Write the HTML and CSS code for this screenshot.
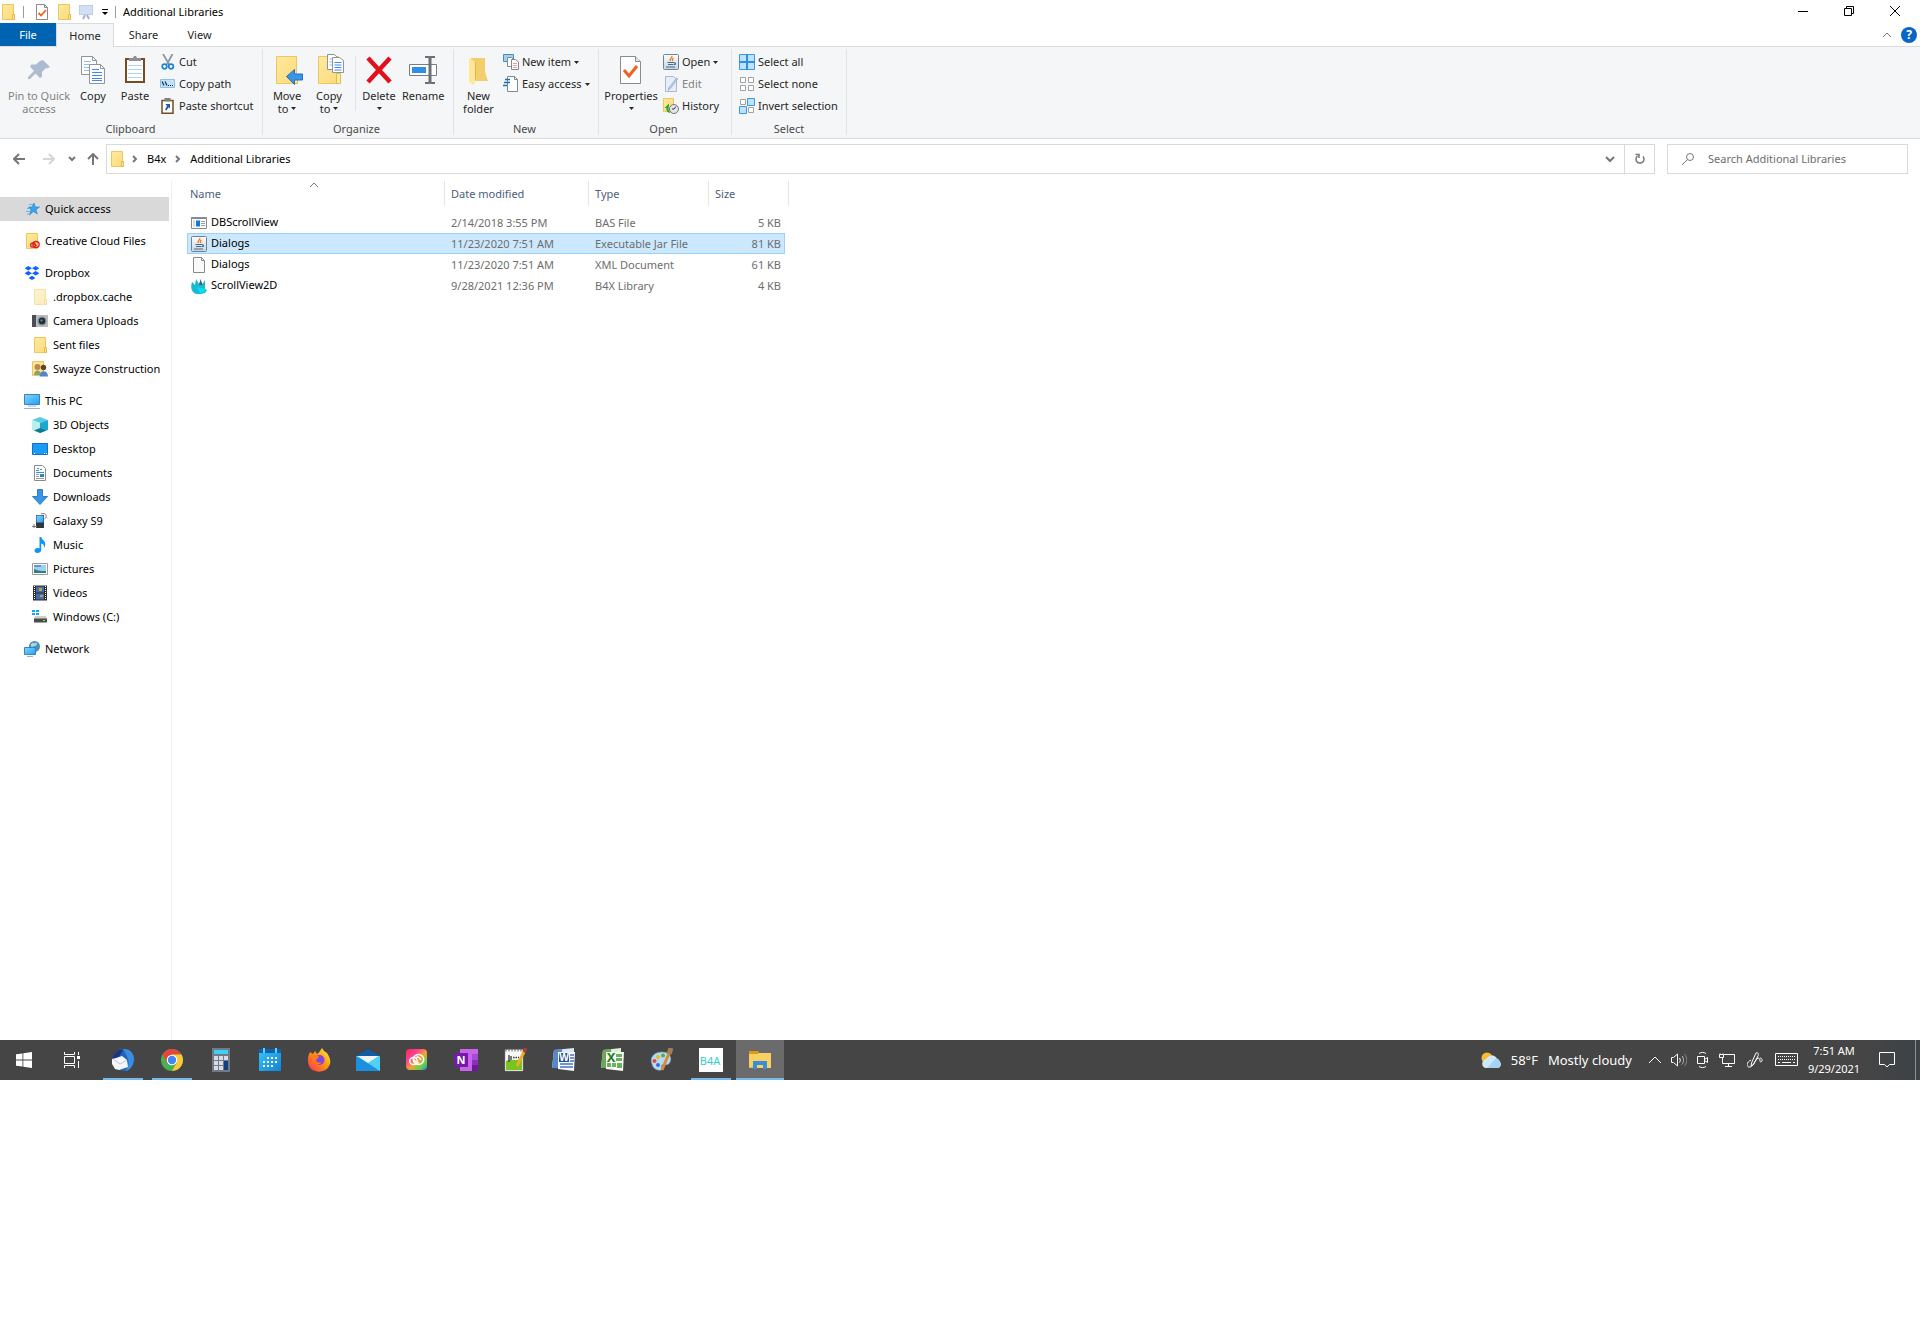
FILE: index.html
```html
<!DOCTYPE html>
<html lang="en">
<head>
  <meta charset="UTF-8">
  <title>Additional Libraries</title>
  <link rel="stylesheet" href="styles.css">
</head>
<body>
  <svg class="sprite" aria-hidden="true">
    <defs>
      <linearGradient id="gFolder" x1="0" y1="0" x2="1" y2="1">
        <stop offset="0" stop-color="#ffeaa0"/><stop offset="1" stop-color="#fbd97a"/>
      </linearGradient>
      <linearGradient id="gScreen" x1="0" y1="0" x2="1" y2="1">
        <stop offset="0" stop-color="#86d4ff"/><stop offset="1" stop-color="#1ea0fb"/>
      </linearGradient>
      <linearGradient id="gBlue" x1="0" y1="0" x2="1" y2="1">
        <stop offset="0" stop-color="#36c5f5"/><stop offset="1" stop-color="#1183d8"/>
      </linearGradient>
      <linearGradient id="gRainbow" x1="0" y1="0" x2="1" y2="1">
        <stop offset="0" stop-color="#ff2a3c"/><stop offset=".3" stop-color="#ff3e98"/>
        <stop offset=".55" stop-color="#f5a033"/><stop offset=".8" stop-color="#5fd24a"/>
        <stop offset="1" stop-color="#2c7cff"/>
      </linearGradient>
      <linearGradient id="gFire" x1="1" y1="0" x2="0" y2="1">
        <stop offset="0" stop-color="#fff44f"/><stop offset=".45" stop-color="#ff980e"/>
        <stop offset="1" stop-color="#ff2a5f"/>
      </linearGradient>
      <linearGradient id="gJava" x1="0" y1="0" x2="0" y2="1">
        <stop offset="0" stop-color="#fdfdfd"/><stop offset="1" stop-color="#c9d4de"/>
      </linearGradient>
    </defs>

    <symbol id="folder" viewBox="0 0 16 16">
      <path d="M2.5.5h11v10h1v5h-12z" fill="url(#gFolder)" stroke="#ecc75d"/>
      <path d="M12.5 10.5h2v5h-2z" fill="#ffe9a2" stroke="#e4bb4b"/>
    </symbol>
    <symbol id="check-page" viewBox="0 0 16 16">
      <path d="M2.5.5h8l3 3v12h-11z" fill="#fff" stroke="#8b8b8b"/>
      <path d="M10.5.5v3h3" fill="none" stroke="#8b8b8b"/>
      <path d="M4.5 9l2.500 2.500 5-5.500" fill="none" stroke="#f2601f" stroke-width="1.800"/>
    </symbol>
    <symbol id="easel" viewBox="0 0 16 16">
      <path d="M1 1h14v10H1z" fill="#bccfe9"/>
      <path d="M2 2h12v8H2z" fill="#d3e0f3"/>
      <path d="M7 11l-2 4M9 11l2 4" stroke="#9fb3d2" stroke-width="2"/>
    </symbol>
    <symbol id="pin" viewBox="0 0 32 32">
      <path d="M20 6l7 7-3 1.500-1-.5-4 4 0 4.500-2 1.500-4.500-4.500L7 25H5v-2l6-6-4-4.500 1.500-2H13l4-3.500z" fill="#adbbd0"/>
    </symbol>
    <symbol id="copy" viewBox="0 0 32 32">
      <path d="M4.500 2.500h11l4 4v14h-15z" fill="#fff" stroke="#8f959c"/>
      <path d="M15.500 2.500v4h4" fill="none" stroke="#8f959c"/>
      <path d="M7 7.500h7M7 10.500h10M7 13.500h10M7 16.500h10" stroke="#8fbdf0"/>
      <path d="M12.500 10.500h11l4 4v15h-15z" fill="#fff" stroke="#8f959c"/>
      <path d="M23.500 10.500v4h4" fill="none" stroke="#8f959c"/>
      <path d="M15 15.500h7M15 18.500h10M15 21.500h10M15 24.500h10M15 26.500h10" stroke="#3f8ce8"/>
    </symbol>
    <symbol id="paste" viewBox="0 0 32 32">
      <path d="M7 5h18v23H7z" fill="#fff" stroke="#7a4a23" stroke-width="2"/>
      <path d="M9 11.500h14M9 15.500h14M9 19.500h14M9 23.500h14" stroke="#a9d7ee"/>
      <path d="M10 7V4h4l1-2h2l1 2h4v3z" fill="#8d8f92"/>
    </symbol>
    <symbol id="cut" viewBox="0 0 16 16">
      <path d="M3 0l6.500 11M12.500 0L6.500 11" stroke="#8b98a5" stroke-width="1.800"/>
      <circle cx="4.500" cy="12.500" r="2.300" fill="none" stroke="#1d83c9" stroke-width="1.700"/>
      <circle cx="11" cy="12.500" r="2.300" fill="none" stroke="#1d83c9" stroke-width="1.700"/>
    </symbol>
    <symbol id="copy-path" viewBox="0 0 16 16">
      <path d="M.5 3.500h14v8H.5z" fill="#c3e2f8" stroke="#8dc0e8"/>
      <path d="M2 5.500l2 4M5 5.500l2 4" stroke="#15324b" stroke-width="1.200"/>
      <path d="M8 9.500h1M10 9.500h1M12 9.500h1" stroke="#15324b"/>
    </symbol>
    <symbol id="paste-shortcut" viewBox="0 0 16 16">
      <path d="M2 2.500h11v12.700H2z" fill="#fff" stroke="#7a4a23" stroke-width="1.500"/>
      <path d="M4.500 0h6v3.500h-6z" fill="#7d8186"/>
      <path d="M5.500 6H10v4.500L8.500 9.300 6.500 12.500 5 11.500l2-3.500z" fill="#1d5ca8"/>
    </symbol>
    <symbol id="move-to" viewBox="0 0 32 32">
      <path d="M5.500 2.500h20v27h-20z" fill="url(#gFolder)" stroke="#ecc75d"/>
      <path d="M22.500 20.500h4v9h-4z" fill="#ffe9a2" stroke="#e4bb4b"/>
      <path d="M15.500 22.500l8-7v4.500h8v6h-8v4.500z" fill="#3a95e4" stroke="#2272bd"/>
    </symbol>
    <symbol id="copy-to" viewBox="0 0 32 32">
      <path d="M5.500 2.500h20v27h-20z" fill="url(#gFolder)" stroke="#ecc75d"/>
      <path d="M23.500 19.500h4v10h-4z" fill="#ffe9a2" stroke="#e4bb4b"/>
      <path d="M14.500.500h7l3 3v12h-10z" fill="#fff" stroke="#8f959c"/>
      <path d="M16.500 5h6M16.500 8h6M16.500 11h6" stroke="#8fbdf0"/>
      <path d="M19.500 3.500h7l4 3v12h-11z" fill="#fff" stroke="#8f959c"/>
      <path d="M21.500 8.500h7M21.500 11h7M21.500 13.500h7M21.500 16h7" stroke="#3f8ce8"/>
    </symbol>
    <symbol id="delete" viewBox="0 0 32 32">
      <path d="M5 4l22 24M27 4L5 28" stroke="#e3101b" stroke-width="4.500"/>
    </symbol>
    <symbol id="rename" viewBox="0 0 32 32">
      <path d="M2.500 10.500h27v11h-27z" fill="#fff" stroke="#777d83"/>
      <path d="M5 13h14v6H5z" fill="#2f8fe6"/>
      <path d="M23 4v24" stroke="#6b7076" stroke-width="3"/>
      <path d="M18 3h4l1 1 1-1h4M18 29h4l1-1 1 1h4" fill="none" stroke="#6b7076" stroke-width="2"/>
    </symbol>
    <symbol id="new-folder" viewBox="0 0 32 32">
      <path d="M8 4h14v14l3 9H8z" fill="#f3cf6c"/>
      <path d="M6 4l6 4v19l-1 4-5-3z" fill="#ffe798"/>
      <path d="M12 8h1v16l-1 3z" fill="#dfb54d"/>
    </symbol>
    <symbol id="new-item" viewBox="0 0 16 16">
      <path d="M.5.5h10v7H.5z" fill="#9fd0ee" stroke="#4a8dba"/>
      <path d="M4.500 3.500h4l2 2v7h-6z" fill="#fff" stroke="#82888f"/>
      <path d="M8.500 5.500h4l3 2.500v7.500h-7z" fill="#fff" stroke="#82888f"/>
      <path d="M10 9.500h4M10 11.500h4M10 13.500h4" stroke="#e0a0a0"/>
    </symbol>
    <symbol id="easy-access" viewBox="0 0 16 16">
      <path d="M4.500.5h7l3 3v12h-10z" fill="#fff" stroke="#82888f"/>
      <path d="M11.500.5v3h3" fill="none" stroke="#82888f"/>
      <path d="M2 3.500h5M1 6.500h6M0 9.500h4" stroke="#1c72b8" stroke-width="1.400"/>
    </symbol>
    <symbol id="properties" viewBox="0 0 32 32">
      <path d="M5.500 2.500h15l5 5v22h-20z" fill="#fdfdfd" stroke="#8b8b8b"/>
      <path d="M20.500 2.500v5h5" fill="#e6e6e6" stroke="#8b8b8b"/>
      <path d="M9 16l5 6 8-10" fill="none" stroke="#f2601f" stroke-width="3"/>
    </symbol>
    <symbol id="java" viewBox="0 0 16 16">
      <rect x=".5" y=".5" width="15" height="15" rx="1" fill="url(#gJava)" stroke="#6d8297"/>
      <path d="M8.800 2c1 1.500-2.800 2.500-1.300 5M10.500 4c-1.500.8-1.500 1.500-.8 3" fill="none" stroke="#ee7d20" stroke-width="1.300"/>
      <path d="M4.500 8.500h7M5 10.500h5.500M3 13h9M11 9h1.500v1.500H11" fill="none" stroke="#3f6b93"/>
    </symbol>
    <symbol id="edit" viewBox="0 0 16 16">
      <path d="M2.500.5h8l3 3v12h-11z" fill="#e7eefa" stroke="#a9b9d4"/>
      <path d="M15 3L7 13l-2 1.500.5-2.500 8-10z" fill="#b6c6e0" stroke="#9aadcc" stroke-width=".6"/>
    </symbol>
    <symbol id="history" viewBox="0 0 16 16">
      <path d="M.5.5h10v13H.5z" fill="url(#gFolder)" stroke="#ecc75d"/>
      <circle cx="11" cy="11" r="4.500" fill="#e2e6ea" stroke="#71777d"/>
      <path d="M11 11l2-2.500M11 11h-2" stroke="#333"/>
      <path d="M1.500 10L6 5.500v2.500C5 10.500 5.500 13 7.500 14.800 4.500 14.800 3 12.500 3.500 10z" fill="#1fa531"/>
    </symbol>
    <symbol id="select-all" viewBox="0 0 16 16">
      <path d="M.5.5h15v15H.5z" fill="#bfe2fc" stroke="#3a98e6"/>
      <path d="M8 0v16M0 8h16" stroke="#2f8fe0" stroke-width="2"/>
    </symbol>
    <symbol id="select-none" viewBox="0 0 16 16">
      <path d="M1.500 1.500h5v5h-5zM9.500 1.500h5v5h-5zM1.500 9.500h5v5h-5zM9.500 9.500h5v5h-5z" fill="#fff" stroke="#a3a3a3"/>
    </symbol>
    <symbol id="invert" viewBox="0 0 16 16">
      <path d="M1.500 1.500h5v5h-5zM9.500 9.500h5v5h-5z" fill="#fff" stroke="#a3a3a3"/>
      <path d="M8.500.5h7v7h-7zM.5 8.500h7v7h-7z" fill="#bfe2fc" stroke="#3a98e6"/>
    </symbol>

    <symbol id="star" viewBox="0 0 16 16">
      <path d="M10 2l1.300 4H15.500l-3.500 2.700 1.300 4.300L9.500 10.500 5.500 14 7 9 4.500 6H8z" fill="#39a3ea" stroke="#2484c7" stroke-width=".6"/>
      <path d="M5 3.500h4M3 7.500h3M2 10.500h4M3 13h2" stroke="#5fb7ee"/>
    </symbol>
    <symbol id="cc-folder" viewBox="0 0 16 16">
      <path d="M2.500.5h11v15h-11z" fill="url(#gFolder)" stroke="#ecc75d"/>
      <ellipse cx="9" cy="12" rx="2.400" ry="2.200" fill="#ffe08a" stroke="#da1f26" stroke-width="1.300"/>
      <ellipse cx="12" cy="11.500" rx="3.200" ry="3" fill="none" stroke="#da1f26" stroke-width="1.300"/>
      <path d="M9 11.500c1.500-1.500 2 2 4 .8" fill="none" stroke="#da1f26"/>
    </symbol>
    <symbol id="dropbox" viewBox="0 0 16 16">
      <path d="M4.300 1L8 3.300 4.300 5.600.6 3.300zM11.700 1l3.700 2.300-3.700 2.300L8 3.300zM4.300 6L8 8.300l-3.700 2.300L.6 8.300zM11.700 6l3.700 2.300-3.700 2.300L8 8.300zM8 10.800l3.500 2.100L8 15l-3.500-2.100z" fill="#0f62fe"/>
    </symbol>
    <symbol id="camera" viewBox="0 0 16 16">
      <path d="M0 2h4v12H0z" fill="#4b4f54"/><path d="M4 2h12v12H4z" fill="#b9bcc0"/>
      <circle cx="10" cy="8" r="4.500" fill="#878b90"/><circle cx="10" cy="8" r="3.200" fill="#1d2b33"/>
      <circle cx="9.500" cy="7.500" r="1.200" fill="#3a8c97"/>
    </symbol>
    <symbol id="people" viewBox="0 0 16 16">
      <path d="M.5.5h11v14H.5z" fill="url(#gFolder)" stroke="#ecc75d"/>
      <circle cx="5.500" cy="6" r="3" fill="#b98a4e"/><path d="M2 14c0-6 7-6 7 0z" fill="#7fa67a"/>
      <circle cx="11.500" cy="6.500" r="2.700" fill="#6a4129"/><path d="M7.500 15.500c0-7 8.500-7 8.500 0z" fill="#5585c2"/>
    </symbol>
    <symbol id="pc" viewBox="0 0 16 16">
      <path d="M.5 1.500h15v10H.5z" fill="url(#gScreen)" stroke="#3d83b8"/>
      <path d="M4 13h8M0 15.500h16" stroke="#9eb3c4"/>
    </symbol>
    <symbol id="cube" viewBox="0 0 16 16">
      <path d="M0 3l8-3 8 3-8 3z" fill="#59cbe0"/><path d="M0 3l8 3v10l-8-3z" fill="#b9eef0"/>
      <path d="M8 6l8-3v10l-8 3z" fill="#17a9cf"/><path d="M2 13.500L8 11l6 2.500L8 16z" fill="#12798f"/>
    </symbol>
    <symbol id="desktop" viewBox="0 0 16 16">
      <path d="M.5 2.500h15v11H.5z" fill="#1b9bf9" stroke="#1173b9"/>
      <path d="M2 12.500h1M12 12.500h1M14 12.500h1" stroke="#fff"/>
    </symbol>
    <symbol id="document" viewBox="0 0 16 16">
      <path d="M2.500.5h8l3 3v12h-11z" fill="#fff" stroke="#8a8a8a"/>
      <path d="M4 7.500h8M8 4.500h2M8 9.500h4M4 5.500h3M5 3.500h2" stroke="#2a95e0"/>
      <path d="M4 9.500h3M4 11.500h3M4 13.500h8" stroke="#9a9a9a"/><path d="M8 10h4v2H8z" fill="#3a7f96"/>
    </symbol>
    <symbol id="download" viewBox="0 0 16 16">
      <path d="M5.500.5h5v7h5L8 15.500.5 7.500h5z" fill="#3a93e6" stroke="#2f7dc8"/>
    </symbol>
    <symbol id="device" viewBox="0 0 16 16">
      <path d="M4 2h8v13H4z" fill="#33373b"/><path d="M4.500 2.500h7v7h-7z" fill="url(#gScreen)"/>
      <path d="M9 1c5-2 7 3 3.500 5M0 13.500h5M2 11v4" fill="none" stroke="#777"/>
    </symbol>
    <symbol id="music" viewBox="0 0 16 16">
      <path d="M7.500 0h1.700c.5 3 4 3.500 4 7 0 2-.7 3-1.200 4 .2-3-.6-4-2.800-4.500v6.500c0 2-1.700 3-3.700 3S2.500 15 2.500 13.500C2.500 11.500 5.500 10.500 7.500 11.500z" fill="#0b97f3"/>
    </symbol>
    <symbol id="picture" viewBox="0 0 16 16">
      <path d="M.5 2.500h15v11H.5z" fill="#fff" stroke="#9a9a9a"/><path d="M2 4h12v8H2z" fill="#9fd0ef"/>
      <path d="M2 8l4 1.500 4 .5h4v2H2z" fill="#2f7f7c"/><path d="M2 4h7v2H2z" fill="#5f96d6"/>
    </symbol>
    <symbol id="video" viewBox="0 0 16 16">
      <path d="M1 .5h14v15H1z" fill="#2e2e2e"/><path d="M2.500 1v14M13.500 1v14" stroke="#fff" stroke-dasharray="1 1"/>
      <path d="M4 1.500h8v6H4zM4 8.500h8v6H4z" fill="#3f6db5"/><path d="M7 3h3v3H7zM8 10h3v2H8z" fill="#d89a27"/>
    </symbol>
    <symbol id="drive" viewBox="0 0 16 16">
      <path d="M0 1h3v2H0zM4 1h3v2H4zM0 4h3v2H0zM4 4h3v2H4z" fill="#11a8ee"/>
      <path d="M3 7h11l1 3H2z" fill="#cfcfcf"/><path d="M2 9.500h13v4H2z" fill="#4a4a4a"/><path d="M11 11h2v1h-2z" fill="#5f5"/>
    </symbol>
    <symbol id="network" viewBox="0 0 16 16">
      <circle cx="10.500" cy="5.500" r="5.500" fill="#4b93b5"/><path d="M7 3c2-2 3 0 5-1s1 3-1 3-3 2-4 0z" fill="#a9d8ea"/>
      <path d="M.5 6.500h11v7H.5z" fill="url(#gScreen)" stroke="#3d83b8"/><path d="M3 15.500h6" stroke="#9eb3c4"/>
    </symbol>
    <symbol id="bas" viewBox="0 0 16 16">
      <path d="M.5 2.500h15v11H.5z" fill="#fff" stroke="#858b91"/><path d="M0 2h16v2H0z" fill="#858b91"/>
      <path d="M2 5h2v7H2z" fill="#ddd"/><path d="M5 5.500h4v6H5z" fill="#0f79e0"/><path d="M10 6.500h4M10 8.500h4M10 10.500h4" stroke="#999"/>
    </symbol>
    <symbol id="page" viewBox="0 0 16 16">
      <path d="M2.500.5h8l3 3v12h-11z" fill="#fafafa" stroke="#8a8a8a"/><path d="M10.500.5v3h3" fill="none" stroke="#8a8a8a"/>
    </symbol>
    <symbol id="b4x" viewBox="0 0 16 16">
      <path d="M1 4l3 3 1-6 3 5 1.500-3 2 3 2.500-4v9l2 1-2 3-4 1H6C1 15-1 10 1 4z" fill="#19b9d0"/>
      <path d="M8 7l1.500-6 2 6z" fill="#3d6278"/><path d="M6 9l9 2-2 3-4 1.500z" fill="#06e0f2"/>
    </symbol>

    <symbol id="windows" viewBox="0 0 16 16">
      <path d="M0 2.300L6.500 1.400v6.200H0zM7.300 1.300L16 0v7.600H7.300zM0 8.400h6.500v6.200L0 13.700zM7.300 8.400H16V16l-8.700-1.300z" fill="#fff"/>
    </symbol>
    <symbol id="taskview" viewBox="0 0 16 16">
      <path d="M.5 0v2.500h10V0M.5 16v-2.500h10V16M.5 4.500h10v7H.5zM14.500 0v3M14.500 9v7" fill="none" stroke="#fff"/>
      <path d="M13 4h3v3h-3z" fill="#fff"/>
    </symbol>
    <symbol id="thunderbird" viewBox="0 0 24 24">
      <circle cx="12.500" cy="12" r="11" fill="#2463b4"/><path d="M12 1c8-1 13 7 10 14-1 5-5 8-8 8 5-5 5-12-2-22z" fill="#3c8de0"/>
      <path d="M1 12C3 4 8 1 12 2L8 9z" fill="#20337e"/>
      <path d="M1 11l4-1 6-2 5 4 1 7-9 3-4-1-3-5z" fill="#f5f6fa"/><path d="M2 11l7 5 7-4" fill="none" stroke="#bcc6d8"/>
    </symbol>
    <symbol id="chrome" viewBox="0 0 24 24">
      <circle cx="12" cy="12" r="11" fill="#4caf50"/>
      <path d="M2.500 6.500A11 11 0 0 1 21.500 6.500H12L7.200 14.700z" fill="#e5453a"/>
      <path d="M21.500 6.500A11 11 0 0 1 12 23l4.800-8.200L12 6.500z" fill="#fcc934"/>
      <circle cx="12" cy="12" r="5.300" fill="#fff"/><circle cx="12" cy="12" r="4.200" fill="#4285f4"/>
    </symbol>
    <symbol id="calculator" viewBox="0 0 24 24">
      <path d="M3 0h18v24H3z" fill="#707b87"/><path d="M5 2h14v4H5z" fill="#3fd0f5"/>
      <path d="M5 8h4v4H5zM10 8h4v4h-4zM15 8h4v4h-4zM5 13h4v4H5zM10 13h4v4h-4zM5 18h4v4H5zM10 18h4v4h-4z" fill="#d9dde1"/>
      <path d="M15 13h4v9h-4z" fill="#143f80"/>
    </symbol>
    <symbol id="calendar" viewBox="0 0 24 24">
      <path d="M1 1h22v22H1z" fill="url(#gBlue)"/><path d="M1 1h22v4H1z" fill="#0d62b5"/>
      <path d="M5 0h2v5H5zM17 0h2v5h-2z" fill="#5ed3f7"/>
      <path d="M9 10h10M5 14h14M5 18h10" stroke="#fff" stroke-width="2" stroke-dasharray="2 2"/>
    </symbol>
    <symbol id="firefox" viewBox="0 0 24 24">
      <path d="M3 4l3 2 2-3 2 3c2-1 3-3 5-6l2 3 3 2c4 6 4 10 2 13-3 7-16 8-20 0C0 12 1 8 3 4z" fill="url(#gFire)"/>
      <circle cx="12.500" cy="12" r="5" fill="#8046dd"/><path d="M6 7c3 0 5 0 6 2l-3 3c0 3 4 3 6 2-2 4-9 3-10-2z" fill="#ff7a1c"/>
    </symbol>
    <symbol id="mail" viewBox="0 0 24 24">
      <path d="M0 8l12-7 12 7v4H0z" fill="#0f5ca8"/>
      <path d="M0 8h24v15H0z" fill="#2fb7ee"/><path d="M0 8l24 15H0z" fill="#1b8fe0"/><path d="M24 8v15L12 15z" fill="#4fd0f7"/>
      <path d="M1 8h22l-11 7z" fill="#f2f3f4"/>
    </symbol>
    <symbol id="creative" viewBox="0 0 24 24">
      <rect x="1" y="1" width="21" height="21" rx="4" fill="url(#gRainbow)"/>
      <ellipse cx="8.500" cy="13" rx="3.800" ry="3.600" fill="none" stroke="#fff" stroke-width="1.500"/>
      <ellipse cx="13.500" cy="11.500" rx="5.200" ry="5" fill="none" stroke="#fff" stroke-width="1.500"/>
      <path d="M8 12.500c2-2 3 4.500 6 2M11 10c2-2 3-1 5 2" fill="none" stroke="#fff" stroke-width="1.500"/>
    </symbol>
    <symbol id="notepad" viewBox="0 0 24 24">
      <path d="M2 1.500h18v21.500H2z" fill="#f7f8f7" stroke="#888" stroke-width=".5"/><path d="M3 13c5-2 9 0 16-2v11H3z" fill="#79c51e"/>
      <path d="M3 .5v3M6 .5v3M9 .5v3M12 .5v3M15 .5v3M18 .5v3" stroke="#666"/><path d="M6 7v7M8 8v4M10 9.500h1.500M12.500 9.500H14M15 9.500h1" stroke="#333" stroke-width="1.300"/>
      <path d="M21 4l-7 14" stroke="#e9ac2c" stroke-width="3"/><path d="M23 0l-2 4" stroke="#b33d2c" stroke-width="3"/>
    </symbol>
    <symbol id="paint" viewBox="0 0 24 24">
      <path d="M2 16C-1 9 5 4 12 4c8 0 10 6 8 10-2 5-6 1-8 3s2 4-1 5-8-1-9-6z" fill="#b5dbf0" stroke="#6fa5c4" stroke-width=".6"/>
      <circle cx="4.500" cy="13" r="2" fill="#e04b39"/><circle cx="8" cy="9" r="2" fill="#e6bd2f"/><circle cx="13" cy="7.500" r="2" fill="#57ae45"/><circle cx="8" cy="17" r="2" fill="#3b6fd0"/>
      <path d="M20 3l-8 19" stroke="#d98a35" stroke-width="3"/><path d="M21 0l-2 6" stroke="#a57b59" stroke-width="5"/>
    </symbol>
    <symbol id="explorer" viewBox="0 0 24 24">
      <path d="M1 5h22v15H1z" fill="#fbd063"/><path d="M1 3h9l1 1-1 2H1z" fill="#dc9b17"/>
      <path d="M5 13h14v8h-4v-4H9v4H5z" fill="#3490dd"/><path d="M1 20h4v-1H1z" fill="#e6b64a"/>
    </symbol>
    <symbol id="weather" viewBox="0 0 20 16">
      <circle cx="6" cy="6" r="5.500" fill="#f8bb34"/>
      <path d="M4.500 16a4.500 4.500 0 0 1-.5-8.500C6 7 6.500 3.500 11 3.500c3.500 0 5 2.500 5.200 4.500 5 .5 4.800 8 0 8z" fill="#cfe8fa"/>
      <path d="M6 16l9-10c5 1 6 9 1 10z" fill="#a5d3f3"/>
    </symbol>
    <symbol id="speaker" viewBox="0 0 16 16">
      <path d="M.5 5.500h2l4-3.500v12l-4-3.500h-2z" fill="none" stroke="#fff"/>
      <path d="M8.500 6c1 1.500 1 3 0 4.500" fill="none" stroke="#fff"/><path d="M11 4c2 2.500 2 6 0 8.500" fill="none" stroke="#bbb"/><path d="M13.500 2c3 4 3 8.500 0 12" fill="none" stroke="#888"/>
    </symbol>
    <symbol id="meet-now" viewBox="0 0 16 16">
      <path d="M2.500 4.500h7v7h-7zM9.500 7.500l3-2v5l-3-2" fill="none" stroke="#fff"/><path d="M4 1.500C6 0 9 0 11 1.500M4 14.500c2 1.500 5 1.500 7 0" fill="none" stroke="#fff"/>
    </symbol>
    <symbol id="ethernet" viewBox="0 0 16 16">
      <path d="M5 2.500h10.500v9H3.500V6M9.500 11.500v3M6 14.500h7M.5 2.500h4v3h-4zM1 2.500v-1M4 2.500v-1" fill="none" stroke="#fff"/>
    </symbol>
    <symbol id="pen" viewBox="0 0 16 16">
      <path d="M9 1c2-1 3 1 2 3l-5 9-2 1 .5-3zM4 8c-6 3-4 8-1 7 4-1 5-7 8-9 3 0 1 4 3 4 2-1 1-4-1-4" fill="none" stroke="#fff"/>
    </symbol>
    <symbol id="keyboard" viewBox="0 0 24 16">
      <path d="M.5 1.500h22v12H.5z" fill="none" stroke="#fff"/><path d="M3 4.500h18M3 7.500h18" stroke="#fff" stroke-dasharray="1 1"/><path d="M3 10.500h2M7 10.500h9M18 10.500h2" stroke="#fff"/>
    </symbol>
    <symbol id="notifications" viewBox="0 0 16 16">
      <path d="M.5.5h15v12h-5L8 15l-2.500-2.500h-5z" fill="none" stroke="#fff"/>
    </symbol>
    <symbol id="caret" viewBox="0 0 5 3"><path d="M0 0h5L2.500 3z" fill="currentColor"/></symbol>
  </svg>

  <div class="screen">
    <header class="title-bar">
      <svg class="icon"><use href="#folder"/></svg>
      <span class="divider"></span>
      <div class="qat">
        <button title="Properties"><svg class="icon"><use href="#check-page"/></svg></button>
        <button title="New folder"><svg class="icon"><use href="#folder"/></svg></button>
        <button title="Customize"><svg class="icon"><use href="#easel"/></svg></button>
        <button class="qat-menu" title="Quick access menu"><svg viewBox="0 0 8 6"><path d="M1 .5h6" stroke="#000"/><path d="M1 3h6L4 6z"/></svg></button>
      </div>
      <span class="divider"></span>
      <h1>Additional Libraries</h1>
      <div class="window-buttons">
        <button title="Minimize"><svg viewBox="0 0 10 10"><path d="M0 5.500h10" stroke="#000"/></svg></button>
        <button title="Restore"><svg viewBox="0 0 10 10"><path d="M.5 2.500h7v7h-7zM2.500 2.500v-2h7v7h-2" fill="none" stroke="#000"/></svg></button>
        <button title="Close"><svg viewBox="0 0 10 10"><path d="M0 0l10 10M10 0L0 10" stroke="#000"/></svg></button>
      </div>
    </header>

    <nav class="tabs">
      <button class="tab file">File</button>
      <button class="tab home">Home</button>
      <button class="tab share">Share</button>
      <button class="tab view">View</button>
      <div class="tabs-right">
        <button title="Minimize the Ribbon"><svg class="collapse" viewBox="0 0 10 8"><path d="M1 6l4-4 4 4"/></svg></button>
        <button class="help" title="Help">?</button>
      </div>
    </nav>

    <div class="ribbon">
      <section class="group clipboard">
        <div class="tools">
          <button class="big pin" disabled><svg><use href="#pin"/></svg>Pin to Quick<br>access</button>
          <button class="big copy"><svg><use href="#copy"/></svg>Copy</button>
          <button class="big paste"><svg><use href="#paste"/></svg>Paste</button>
          <div class="small-tools">
            <button><svg class="icon"><use href="#cut"/></svg>Cut</button>
            <button><svg class="icon"><use href="#copy-path"/></svg>Copy path</button>
            <button><svg class="icon"><use href="#paste-shortcut"/></svg>Paste shortcut</button>
          </div>
        </div>
        <h2>Clipboard</h2>
      </section>
      <section class="group organize">
        <div class="tools">
          <button class="big move"><svg><use href="#move-to"/></svg>Move<br>to <svg class="caret"><use href="#caret"/></svg></button>
          <button class="big copy-to"><svg><use href="#copy-to"/></svg>Copy<br>to <svg class="caret"><use href="#caret"/></svg></button>
          <span class="tool-divider"></span>
          <button class="big delete"><svg><use href="#delete"/></svg>Delete<br><svg class="caret"><use href="#caret"/></svg></button>
          <button class="big rename"><svg><use href="#rename"/></svg>Rename</button>
        </div>
        <h2>Organize</h2>
      </section>
      <section class="group new">
        <div class="tools">
          <button class="big new-folder"><svg><use href="#new-folder"/></svg>New<br>folder</button>
          <div class="small-tools">
            <button><svg class="icon"><use href="#new-item"/></svg>New item<svg class="caret"><use href="#caret"/></svg></button>
            <button><svg class="icon"><use href="#easy-access"/></svg>Easy access<svg class="caret"><use href="#caret"/></svg></button>
          </div>
        </div>
        <h2>New</h2>
      </section>
      <section class="group open">
        <div class="tools">
          <button class="big properties"><svg><use href="#properties"/></svg>Properties<br><svg class="caret"><use href="#caret"/></svg></button>
          <div class="small-tools">
            <button><svg class="icon"><use href="#java"/></svg>Open<svg class="caret"><use href="#caret"/></svg></button>
            <button disabled><svg class="icon"><use href="#edit"/></svg>Edit</button>
            <button><svg class="icon"><use href="#history"/></svg>History</button>
          </div>
        </div>
        <h2>Open</h2>
      </section>
      <section class="group select">
        <div class="tools">
          <div class="small-tools">
            <button><svg class="icon"><use href="#select-all"/></svg>Select all</button>
            <button><svg class="icon"><use href="#select-none"/></svg>Select none</button>
            <button><svg class="icon"><use href="#invert"/></svg>Invert selection</button>
          </div>
        </div>
        <h2>Select</h2>
      </section>
    </div>

    <div class="nav-bar">
      <button class="nav-btn" title="Back"><svg viewBox="0 0 12 12"><path d="M12 6H1M6 1L1 6l5 5"/></svg></button>
      <button class="nav-btn" title="Forward" disabled><svg viewBox="0 0 12 12"><path d="M0 6h11M6 1l5 5-5 5"/></svg></button>
      <button class="nav-btn recent" title="Recent locations"><svg viewBox="0 0 12 12"><path d="M3 4l3 3 3-3"/></svg></button>
      <button class="nav-btn up" title="Up"><svg viewBox="0 0 12 12"><path d="M6 12V1M1 6l5-5 5 5"/></svg></button>
      <div class="address">
        <svg class="icon"><use href="#folder"/></svg>
        <svg class="crumb-arrow" viewBox="0 0 8 8"><path d="M2 1l3 3-3 3"/></svg>
        <a href="#">B4x</a>
        <svg class="crumb-arrow" viewBox="0 0 8 8"><path d="M2 1l3 3-3 3"/></svg>
        <a href="#">Additional Libraries</a>
        <button class="previous" title="Previous locations"><svg viewBox="0 0 12 12"><path d="M2 4l4 4 4-4"/></svg></button>
        <button class="refresh" title="Refresh"><svg viewBox="0 0 12 12"><path d="M9 3.500a4 4 0 1 1-5.500-.5M1.500 1.500H5V5"/></svg></button>
      </div>
      <label class="search">
        <svg viewBox="0 0 12 12"><circle cx="8" cy="4" r="3.500"/><path d="M5.500 6.500L0 12"/></svg>
        <input type="text" placeholder="Search Additional Libraries" aria-label="Search Additional Libraries">
      </label>
    </div>

    <main class="content">
      <nav class="sidebar">
        <ul>
          <li class="root active"><a href="#"><svg class="icon"><use href="#star"/></svg>Quick access</a></li>
        </ul>
        <ul>
          <li class="root"><a href="#"><svg class="icon"><use href="#cc-folder"/></svg>Creative Cloud Files</a></li>
        </ul>
        <ul>
          <li class="root"><a href="#"><svg class="icon"><use href="#dropbox"/></svg>Dropbox</a></li>
          <li><a href="#"><svg class="icon faded"><use href="#folder"/></svg>.dropbox.cache</a></li>
          <li><a href="#"><svg class="icon"><use href="#camera"/></svg>Camera Uploads</a></li>
          <li><a href="#"><svg class="icon"><use href="#folder"/></svg>Sent files</a></li>
          <li><a href="#"><svg class="icon"><use href="#people"/></svg>Swayze Construction</a></li>
        </ul>
        <ul>
          <li class="root"><a href="#"><svg class="icon"><use href="#pc"/></svg>This PC</a></li>
          <li><a href="#"><svg class="icon"><use href="#cube"/></svg>3D Objects</a></li>
          <li><a href="#"><svg class="icon"><use href="#desktop"/></svg>Desktop</a></li>
          <li><a href="#"><svg class="icon"><use href="#document"/></svg>Documents</a></li>
          <li><a href="#"><svg class="icon"><use href="#download"/></svg>Downloads</a></li>
          <li><a href="#"><svg class="icon"><use href="#device"/></svg>Galaxy S9</a></li>
          <li><a href="#"><svg class="icon"><use href="#music"/></svg>Music</a></li>
          <li><a href="#"><svg class="icon"><use href="#picture"/></svg>Pictures</a></li>
          <li><a href="#"><svg class="icon"><use href="#video"/></svg>Videos</a></li>
          <li><a href="#"><svg class="icon"><use href="#drive"/></svg>Windows (C:)</a></li>
        </ul>
        <ul>
          <li class="root"><a href="#"><svg class="icon"><use href="#network"/></svg>Network</a></li>
        </ul>
      </nav>

      <div class="files">
        <table>
          <thead>
            <tr>
              <th class="col-name">Name<svg class="sort" viewBox="0 0 10 8"><path d="M1 6l4-4 4 4"/></svg></th>
              <th class="col-date">Date modified</th>
              <th class="col-type">Type</th>
              <th class="col-size">Size</th>
            </tr>
          </thead>
          <tbody>
            <tr>
              <td><svg class="icon"><use href="#bas"/></svg>DBScrollView</td>
              <td>2/14/2018 3:55 PM</td><td>BAS File</td><td>5 KB</td>
            </tr>
            <tr class="selected">
              <td><svg class="icon"><use href="#java"/></svg>Dialogs</td>
              <td>11/23/2020 7:51 AM</td><td>Executable Jar File</td><td>81 KB</td>
            </tr>
            <tr>
              <td><svg class="icon"><use href="#page"/></svg>Dialogs</td>
              <td>11/23/2020 7:51 AM</td><td>XML Document</td><td>61 KB</td>
            </tr>
            <tr>
              <td><svg class="icon"><use href="#b4x"/></svg>ScrollView2D</td>
              <td>9/28/2021 12:36 PM</td><td>B4X Library</td><td>4 KB</td>
            </tr>
          </tbody>
        </table>
      </div>
    </main>

    <footer class="taskbar">
      <button class="system" title="Start"><svg class="icon"><use href="#windows"/></svg></button>
      <button class="system" title="Task View"><svg class="icon"><use href="#taskview"/></svg></button>
      <div class="apps">
        <button class="running" title="Thunderbird"><svg><use href="#thunderbird"/></svg></button>
        <button class="running" title="Chrome"><svg><use href="#chrome"/></svg></button>
        <button title="Calculator"><svg><use href="#calculator"/></svg></button>
        <button title="Calendar"><svg><use href="#calendar"/></svg></button>
        <button title="Firefox"><svg><use href="#firefox"/></svg></button>
        <button title="Mail"><svg><use href="#mail"/></svg></button>
        <button title="Creative Cloud"><svg><use href="#creative"/></svg></button>
        <button title="OneNote">
          <svg viewBox="0 0 24 24">
            <path d="M6 1h18v22H6z" fill="#c865ea"/><path d="M18 6h6v6h-6z" fill="#a54bd4"/><path d="M18 12h6v5h-6z" fill="#8a2fc0"/><path d="M18 17h6v6h-6z" fill="#6b1999"/>
            <path d="M0 5h14v14H0z" fill="#7719aa"/><text x="7" y="16" class="app-letter" text-anchor="middle">N</text>
          </svg>
        </button>
        <button title="Notepad++"><svg><use href="#notepad"/></svg></button>
        <button title="Word">
          <svg viewBox="0 0 24 24">
            <path d="M2 2l20-2v20L0 20z" fill="#dce8f8"/><path d="M2 2l8-1v19H0z" fill="#5a87c8"/>
            <path d="M6 4h17l-1 19-16-2z" fill="#f5f8fd"/><path d="M7 5h10v9H7z" fill="#274f9b"/>
            <text x="12" y="13" class="app-letter word-letter" text-anchor="middle">W</text>
            <path d="M18 7h4M18 10h4M18 13h4M8 16h13M8 19h13" stroke="#4774bd" stroke-width="1.500"/>
          </svg>
        </button>
        <button title="Excel">
          <svg viewBox="0 0 24 24">
            <path d="M2 2l18-2v20L0 20z" fill="#dff0d9"/><path d="M2 2l8-1v19H0z" fill="#68a95a"/>
            <path d="M5 4h18l-1 19-17-2z" fill="#f5faf3"/>
            <path d="M15 6h6v3h-6zM15 10h6v3h-6zM6 15h4v4H6zM11 15h4v4h-4zM16 15h5v5h-5z" fill="#6fae5e"/>
            <text x="10" y="14" class="app-letter excel-letter" text-anchor="middle">X</text>
          </svg>
        </button>
        <button title="Paint"><svg><use href="#paint"/></svg></button>
        <button class="running" title="B4A">
          <svg viewBox="0 0 24 24"><path d="M0 0h24v24H0z" fill="#fff"/><text x="11" y="17" class="b4a-text" text-anchor="middle">B4A</text></svg>
        </button>
        <button class="running current" title="File Explorer"><svg><use href="#explorer"/></svg></button>
      </div>
      <div class="tray">
        <button class="weather"><svg><use href="#weather"/></svg><span>58°F</span><span>Mostly cloudy</span></button>
        <button title="Show hidden icons"><svg class="tray-chevron" viewBox="0 0 12 12"><path d="M0 9l6-6 6 6" fill="none" stroke="#fff"/></svg></button>
        <button title="Volume"><svg class="icon"><use href="#speaker"/></svg></button>
        <button title="Meet Now"><svg class="icon"><use href="#meet-now"/></svg></button>
        <button title="Network"><svg class="icon"><use href="#ethernet"/></svg></button>
        <button class="wide" title="Windows Ink"><svg class="icon"><use href="#pen"/></svg></button>
        <button class="wide" title="Touch keyboard"><svg class="keyboard"><use href="#keyboard"/></svg></button>
        <button class="clock">7:51 AM<br>9/29/2021</button>
        <button class="notify" title="Notifications"><svg class="icon"><use href="#notifications"/></svg></button>
        <button class="show-desktop" title="Show desktop"></button>
      </div>
    </footer>
  </div>
</body>
</html>
```

FILE: styles.css
```css
:root {
  --accent: #0063b1;
  --ribbon: #f5f6f7;
  --line: #dadbdc;
  --box-line: #d9d9d9;
  --text: #000000;
  --ribbon-text: #262626;
  --muted: #6d6d6d;
  --header-text: #4c607a;
  --selected: #cce8ff;
  --selected-line: #99d1ff;
  --taskbar: #454545;
  --running: #76b9ed;
}

* {
  box-sizing: border-box;
}

body {
  margin: 0;
  background: #fff;
  color: var(--text);
  font-family: "Noto Sans", "Open Sans", sans-serif;
  font-size: 11px;
  line-height: 16px;
}

button {
  display: flex;
  align-items: center;
  justify-content: center;
  padding: 0;
  border: none;
  background: none;
  color: inherit;
  font: inherit;
}

a {
  color: inherit;
  text-decoration: none;
}

h1,
h2 {
  margin: 0;
  font-size: 11px;
  font-weight: 400;
}

svg {
  flex: none;
}

.sprite {
  position: absolute;
  width: 0;
  height: 0;
}

.icon {
  width: 16px;
  height: 16px;
}

.caret {
  width: 5px;
  height: 3px;
}

/* the desktop keeps the monitor's proportions */
.screen {
  display: flex;
  flex-direction: column;
  width: 100%;
  aspect-ratio: 16 / 9;
}

/* title bar */
.title-bar {
  display: flex;
  align-items: center;
  height: 23px;
}

.title-bar .divider {
  width: 1px;
  height: 12px;
  margin: 0 7px;
  background: #9a9a9a;
}

.qat {
  display: flex;
  margin-right: -5px;
}

.qat button {
  width: 22px;
  height: 22px;
}

.qat .qat-menu {
  width: 16px;
}

.qat-menu svg {
  width: 8px;
  height: 6px;
}

.window-buttons {
  display: flex;
  align-self: flex-start;
  margin-left: auto;
  margin-right: 2px;
}

.window-buttons button {
  width: 46px;
  height: 21px;
}

.window-buttons svg {
  width: 10px;
  height: 10px;
}

/* tabs */
.tabs {
  display: flex;
  height: 24px;
  border-bottom: 1px solid var(--line);
}

.tab {
  width: 56px;
  color: var(--ribbon-text);
}

.tab.file {
  background: var(--accent);
  color: #fff;
}

.tab.home {
  width: 58px;
  height: 24px;
  border: 1px solid var(--line);
  border-bottom: none;
  background: var(--ribbon);
}

.tab.share {
  width: 59px;
}

.tab.view {
  width: 53px;
}

.tabs-right {
  display: flex;
  align-items: center;
  gap: 9px;
  margin-left: auto;
  padding-right: 3px;
}

.collapse,
.sort {
  width: 10px;
  height: 8px;
  fill: none;
  stroke: #777;
}

.help {
  width: 16px;
  height: 16px;
  border-radius: 50%;
  background: #0a66c5;
  color: #fff;
  font-size: 12px;
  font-weight: 700;
}

/* ribbon */
.ribbon {
  display: flex;
  height: 92px;
  padding: 2px 0 3px;
  border-bottom: 1px solid var(--line);
  background: var(--ribbon);
  color: var(--ribbon-text);
}

.group {
  display: flex;
  flex-direction: column;
  justify-content: space-between;
  padding: 2px 0 0 2px;
  border-right: 1px solid #e2e3e4;
}

.group h2 {
  padding-right: 5px;
  line-height: 12px;
  text-align: center;
  color: #4a4a4a;
}

.tools {
  display: flex;
  align-items: flex-start;
}

.clipboard { width: 263px; padding-left: 4px; }
.organize { width: 191px; }
.new { width: 145px; }
.open { width: 133px; }
.select { width: 115px; padding-left: 5px; }

.big {
  display: block;
  padding-top: 3px;
  line-height: 13px;
  text-align: center;
  white-space: nowrap;
}

.big > svg:first-child {
  display: block;
  width: 32px;
  height: 32px;
  margin: 0 auto 3px;
}

.big .caret {
  vertical-align: 3px;
}

.big.pin { width: 70px; }
.big.copy { width: 38px; }
.big.paste { width: 46px; }
.big.move { width: 44px; }
.big.copy-to { width: 40px; }
.big.delete { width: 46px; }
.big.rename { width: 42px; }
.big.new-folder { width: 45px; }
.big.properties { width: 60px; }

.big:disabled,
.small-tools button:disabled {
  color: #838383;
}

.tool-divider {
  width: 1px;
  height: 55px;
  margin: 5px 0 0 6px;
  background: #e2e3e4;
}

.small-tools {
  padding-left: 2px;
}

.small-tools button {
  gap: 3px;
  height: 22px;
  white-space: nowrap;
}

/* navigation bar */
.nav-bar {
  display: flex;
  align-items: center;
  height: 42px;
  padding: 0 12px 2px 4px;
}

.nav-bar svg:not(.icon) {
  fill: none;
  stroke: #777;
  stroke-width: 2;
}

.nav-btn {
  width: 30px;
}

.nav-btn svg,
.previous svg,
.refresh svg {
  width: 12px;
  height: 12px;
}

.nav-btn:disabled {
  opacity: 0.3;
}

.nav-btn.recent {
  width: 16px;
}

.nav-btn.up {
  width: 26px;
}

.address {
  display: flex;
  flex: 1;
  align-items: center;
  height: 30px;
  padding-left: 2px;
  border: 1px solid var(--box-line);
}

.address .crumb-arrow {
  width: 8px;
  height: 8px;
  margin: 0 8px 0 6px;
  stroke-width: 1;
}

.address a + .crumb-arrow {
  margin-left: 8px;
}

.address .previous {
  width: 28px;
  height: 28px;
  margin-left: auto;
}

.address .refresh {
  width: 30px;
  height: 28px;
  border-left: 1px solid var(--box-line);
}

.nav-bar .refresh svg {
  stroke-width: 1.5;
}

.search {
  display: flex;
  align-items: center;
  gap: 14px;
  width: 241px;
  height: 30px;
  margin-left: 12px;
  padding-left: 14px;
  border: 1px solid var(--box-line);
}

.nav-bar .search svg {
  width: 12px;
  height: 12px;
  stroke-width: 1;
}

.search input {
  flex: 1;
  min-width: 0;
  padding: 0;
  border: none;
  outline: none;
  background: none;
  font: inherit;
}

.search input::placeholder {
  color: var(--muted);
}

/* folder tree */
.content {
  display: flex;
  flex: 1;
}

.sidebar {
  width: 172px;
  padding-top: 16px;
  padding-right: 2px;
  border-right: 1px solid #f0f0f0;
}

.sidebar ul {
  margin: 0 0 8px;
  padding: 0;
  list-style: none;
}

.sidebar a {
  display: flex;
  align-items: center;
  gap: 5px;
  height: 24px;
  padding-left: 32px;
  white-space: nowrap;
}

.sidebar .root a {
  padding-left: 24px;
}

.sidebar .active {
  background: #d9d9d9;
}

.faded {
  opacity: 0.5;
}

/* file list */
.files {
  flex: 1;
  padding-left: 15px;
}

table {
  width: 598px;
  border-spacing: 0;
  table-layout: fixed;
}

th {
  position: relative;
  height: 31px;
  padding: 0 0 5px 6px;
  color: var(--header-text);
  font-weight: 400;
  text-align: left;
}

th::after {
  content: '';
  position: absolute;
  top: 0;
  right: 0;
  width: 1px;
  height: 25px;
  background: #e5e5e5;
}

.col-name { width: 258px; padding-left: 3px; }
.col-date { width: 144px; }
.col-type { width: 120px; }
.col-size { width: 76px; }

.col-size::after {
  right: -4px;
}

.sort {
  position: absolute;
  top: 0;
  left: 122px;
}

td {
  height: 21px;
  padding: 0 4px 0 6px;
  color: var(--muted);
}

td:first-child {
  padding-left: 4px;
  color: var(--text);
}

td:last-child {
  text-align: right;
}

td .icon {
  margin-right: 4px;
  vertical-align: middle;
}

.selected {
  background: var(--selected);
  outline: 1px solid var(--selected-line);
  outline-offset: -1px;
}

/* taskbar */
.taskbar {
  display: flex;
  height: 40px;
  background: linear-gradient(90deg, var(--taskbar) 97%, #3c4246);
  color: #fff;
}

.system {
  width: 48px;
}

.apps {
  display: flex;
  gap: 1px;
  margin-left: 3px;
}

.apps button {
  position: relative;
  width: 48px;
}

.apps svg {
  width: 24px;
  height: 24px;
}

.running::after {
  content: '';
  position: absolute;
  right: 4px;
  bottom: 0;
  left: 4px;
  height: 2px;
  background: var(--running);
}

.current {
  background: #6b6b6b;
}

.current::after {
  right: 0;
  left: 0;
}

.app-letter {
  fill: #fff;
  font-size: 11px;
  font-weight: 700;
}

.word-letter {
  font-size: 10px;
}

.excel-letter {
  fill: #2c7a2c;
  font-size: 13px;
}

.b4a-text {
  fill: #37cfc9;
  font-size: 11px;
}

.tray {
  display: flex;
  margin-left: auto;
}

.tray button {
  width: 24px;
}

.tray .weather {
  gap: 10px;
  width: auto;
  margin-right: 11px;
  font-size: 13px;
}

.weather svg {
  width: 20px;
  height: 16px;
}

.tray-chevron {
  width: 12px;
  height: 12px;
}

.tray .wide {
  width: 32px;
}

.keyboard {
  width: 24px;
  height: 16px;
}

.tray .clock {
  width: 62px;
  line-height: 18px;
}

.tray .notify {
  width: 44px;
}

.tray .show-desktop {
  width: 5px;
  margin-left: 6px;
  border-left: 1px solid #8b8f92;
}
```
